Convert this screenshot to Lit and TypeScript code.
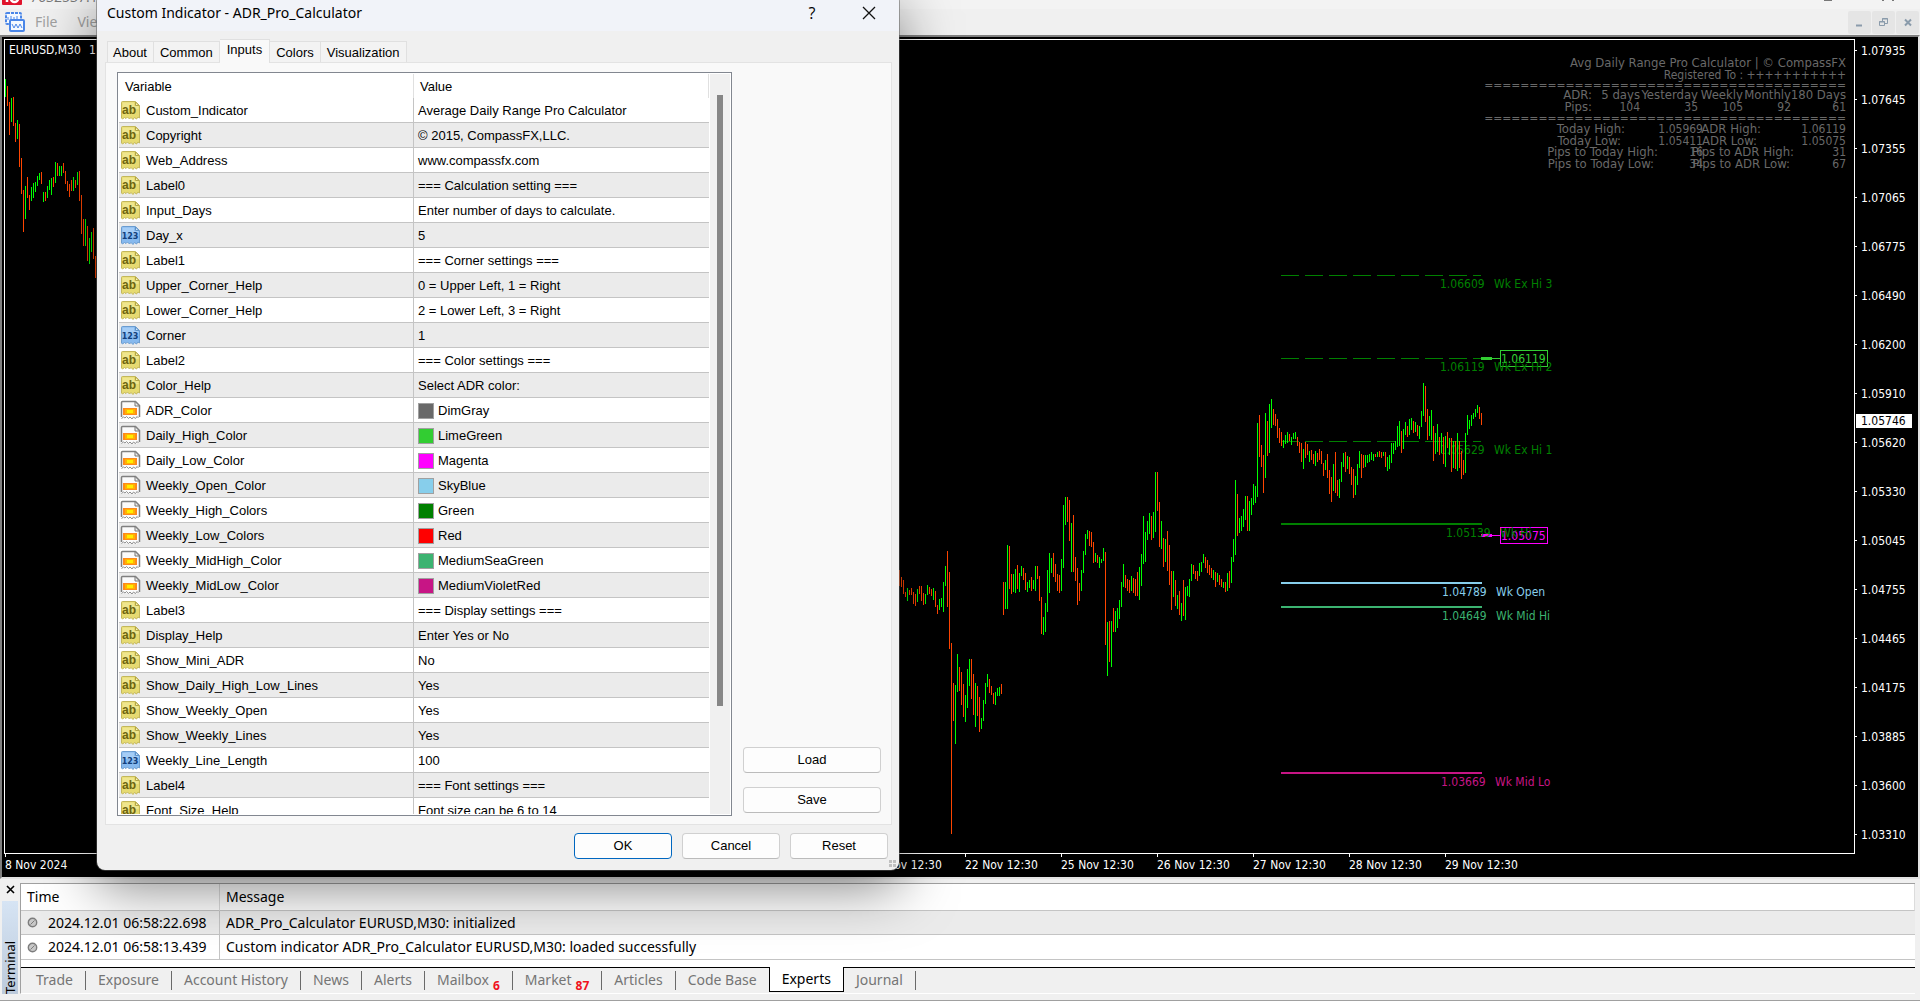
import { LitElement, html, css, svg, nothing } from "lit";
import { customElement, property, state } from "lit/decorators.js";
import { classMap } from "lit/directives/class-map.js";

type Kind = "text" | "number" | "color";
type Input = { kind: Kind; name: string; value: string };

const t = (name: string, value: string): Input => ({ kind: "text", name, value });
const n = (name: string, value: string): Input => ({ kind: "number", name, value });
const c = (name: string, value: string): Input => ({ kind: "color", name, value });

const INPUTS: Input[] = [
  t("Custom_Indicator", "Average Daily Range Pro Calculator"),
  t("Copyright", "© 2015, CompassFX,LLC."),
  t("Web_Address", "www.compassfx.com"),
  t("Label0", "=== Calculation setting ==="),
  t("Input_Days", "Enter number of days to calculate."),
  n("Day_x", "5"),
  t("Label1", "=== Corner settings ==="),
  t("Upper_Corner_Help", "0 = Upper Left, 1 = Right"),
  t("Lower_Corner_Help", "2 = Lower Left, 3 = Right"),
  n("Corner", "1"),
  t("Label2", "=== Color settings ==="),
  t("Color_Help", "Select ADR color:"),
  c("ADR_Color", "DimGray"),
  c("Daily_High_Color", "LimeGreen"),
  c("Daily_Low_Color", "Magenta"),
  c("Weekly_Open_Color", "SkyBlue"),
  c("Weekly_High_Colors", "Green"),
  c("Weekly_Low_Colors", "Red"),
  c("Weekly_MidHigh_Color", "MediumSeaGreen"),
  c("Weekly_MidLow_Color", "MediumVioletRed"),
  t("Label3", "=== Display settings ==="),
  t("Display_Help", "Enter Yes or No"),
  t("Show_Mini_ADR", "No"),
  t("Show_Daily_High_Low_Lines", "Yes"),
  t("Show_Weekly_Open", "Yes"),
  t("Show_Weekly_Lines", "Yes"),
  n("Weekly_Line_Length", "100"),
  t("Label4", "=== Font settings ==="),
  t("Font_Size_Help", "Font size can be 6 to 14"),
];

/* Each bar is its colour (g up, r down), then high and low in thirds of a pixel below the run's y. */
type Run = { x: number; y: number; bars: string };
const RUNS: Run[] = [
  {
    x: 5,
    y: 0,
    bars: `g237-291 r258-318 r306-405 g294-366 r291-378 r369-426 g360-417 r372-501 r474-582 r570-696
      g558-657 r531-594 r585-630 g561-603 g549-594 g546-576 g528-558 g519-540 r516-552 g576-606
      r576-603 g558-594 g540-570 g534-585 r531-561 g486-549 r489-528 g498-528 g498-528 r489-519
      r513-552 r543-573 r552-591 r540-573 g531-573 r540-564 g516-555 r513-603 r585-702 r657-738
      g657-738 r678-783 g714-792 g696-756 r684-777 r768-834`,
  },
  {
    x: 899,
    y: 460,
    bars: `r330-378 r351-381 r360-402 r396-411 g384-423 r390-405 r384-405 r396-432 r402-438 g387-426
      r378-402 r378-423 r399-435 g402-432 g375-405 r381-402 r387-408 g384-420 r393-441 r435-462
      g417-450 g414-441 g366-456 g318-378 r273-441 r336-567 r549-1122 r669-783 g675-852 g582-696
      r621-693 r636-735 r672-771 g705-786 g627-744 g597-678 r597-717 r642-765 g669-801 r678-768
      r711-816 g774-807 g720-783 g669-732 g642-681 r657-699 r678-705 r699-732 g696-735 g684-708
      g681-708 r672-702 r366-465 g366-447 g255-447 r258-387 r342-402 g342-396 g327-399 r315-387
      g339-396 g318-348 r324-360 r339-390 g366-396 g360-384 r351-393 g360-387 g318-393 r318-357
      r348-423 r411-522 g471-525 g429-516 g330-456 g279-399 g294-339 r279-351 r312-366 r342-393
      r345-399 g297-393 g135-324 g111-195 r111-186 r120-243 g189-336 r165-336 r291-363 r324-435
      r369-423 g330-393 g273-339 g222-285 g210-237 r213-258 r216-261 r246-309 g279-306 r285-309
      g291-324 g297-309 g264-303 r276-555 g486-648 r483-606 g483-621 r444-516 g453-516 g444-504
      g420-477 g366-441 g312-381 r345-384 r357-393 r360-399 g348-393 r354-399 r357-408 r336-408
      g321-420 g282-378 g168-312 g216-306 g183-240 g159-222 r168-240 g156-234 g36-216 r36-153
      r126-261 g183-267 r234-321 g237-306 r213-333 r255-375 r333-450 g333-411 r360-438 g405-447
      r393-465 g429-483 r360-468 g381-480 g378-408 g357-411 g312-363 r315-342 r333-357 r333-363
      g309-348 g306-336 g282-309 r291-324 r300-339 r315-345 r324-354 g330-360 r336-381 g339-366
      r345-375 r357-381 g366-384 r366-396 g339-393 r333-384`,
  },
  {
    x: 1231,
    y: 360,
    bars: `g591-669 g537-606 g360-585 r402-528 g474-519 g468-513 g447-501 g408-480 r408-513 g423-513
      g414-465 g372-435 g378-429 g189-411 r165-291 r255-321 r285-399 g159-354 r183-288 g132-279
      g117-204 r147-195 r162-198 r177-234 r204-249 r216-258 g240-264 g225-252 g216-249 r222-243
      g231-255 g219-237 g216-237 r231-258 r246-279 r249-306 g267-327 r246-294 r252-285 g273-306
      r270-300 r282-312 g273-318 r279-306 r267-300 r273-312 r309-348 g300-330 r282-354 r330-402
      r351-426 g312-393 r276-399 r360-408 g357-414 g306-366 g279-321 r276-336 g288-327 r291-342
      r321-375 r327-414 g348-405 g312-375 g273-324 r282-354 r285-324 g285-321 g285-309 g282-306
      g276-300 g282-303 r282-291 g276-291 r273-291 r276-294 g276-288 r276-321 g291-333 g285-327
      g249-309 g249-282 g243-270 g198-261 g183-258 r213-279 g207-267 g186-225 r198-231 g177-225
      g174-210 r183-219 g186-216 r195-228 g198-237 g153-201 g69-168 r78-186 r147-240 g168-228
      g150-240 r198-303 g219-282 g192-276 r231-285 g219-279 r231-312 g228-321 r216-264 g234-285
      r234-336 g243-324 r243-327 g219-333 r243-324 r273-357 r300-345 g219-339 g165-225 g180-207
      g165-198 g159-177 g147-171 g135-159 r141-177 r159-195`,
  },
];

function barPath(colour: string): string {
  let d = "";
  for (const run of RUNS) {
    run.bars
      .trim()
      .split(/\s+/)
      .forEach((bar, i) => {
        if (bar[0] !== colour) return;
        const [high, low] = bar.slice(1).split("-").map((v) => Math.round(Number(v) / 3));
        d += `M${run.x + i * 2} ${run.y + high}h1V${run.y + low}h-1z`;
      });
  }
  return d;
}

const UP = barPath("g");
const DOWN = barPath("r");

const PRICES = [
  "1.07935", "1.07645", "1.07355", "1.07065", "1.06775", "1.06490", "1.06200", "1.05910", "1.05620",
  "1.05330", "1.05045", "1.04755", "1.04465", "1.04175", "1.03885", "1.03600", "1.03310",
];

const DATES = [
  "8 Nov 2024", "", "", "", "", "", "", "", "", "21 Nov 12:30", "22 Nov 12:30", "25 Nov 12:30",
  "26 Nov 12:30", "27 Nov 12:30", "28 Nov 12:30", "29 Nov 12:30",
];

type Level = { y: number; x: number; price: string; name: string; colour: string; dashed?: boolean };
const LEVELS: Level[] = [
  { y: 275, x: 1440, price: "1.06609", name: "Wk Ex Hi 3", colour: "green", dashed: true },
  { y: 358, x: 1440, price: "1.06119", name: "Wk Ex Hi 2", colour: "green", dashed: true },
  { y: 441, x: 1440, price: "1.05629", name: "Wk Ex Hi 1", colour: "green", dashed: true },
  { y: 523, x: 1446, price: "1.05139", name: "Wk Hi", colour: "green" },
  { y: 582, x: 1442, price: "1.04789", name: "Wk Open", colour: "skyblue" },
  { y: 606, x: 1442, price: "1.04649", name: "Wk Mid Hi", colour: "mediumseagreen" },
  { y: 772, x: 1441, price: "1.03669", name: "Wk Mid Lo", colour: "mediumvioletred" },
];

/* Right edge (measured from the plot's right side), baseline, text. */
const RULE = "=".repeat(40);
const LABELS: [number, number, string][] = [
  [-8, 67, "Avg Daily Range Pro Calculator | © CompassFX"],
  [-262, 99, "ADR:"], [-214, 99, "5 days"], [-156, 99, "Yesterday"], [-111, 99, "Weekly"], [-63, 99, "Monthly"], [-8, 99, "180 Days"],
  [-262, 111, "Pips:"],
  [-229, 133, "Today High:"], [-93, 133, "ADR High:"],
  [-233, 145, "Today Low:"], [-97, 145, "ADR Low:"],
  [-196, 156, "Pips to Today High:"], [-60, 156, "Pips to ADR High:"],
  [-200, 168, "Pips to Today Low:"], [-64, 168, "Pips to ADR Low:"],
];
const FIGURES: [number, number, string][] = [
  [-8, 79, "Registered To : +++++++++++"],
  [-8, 89, RULE],
  [-214, 111, "104"], [-156, 111, "35"], [-111, 111, "105"], [-63, 111, "92"], [-8, 111, "61"],
  [-8, 122, RULE],
  [-151, 133, "1.05969"], [-8, 133, "1.06119"],
  [-151, 145, "1.05411"], [-8, 145, "1.05075"],
  [-151, 156, "16"], [-8, 156, "31"],
  [-151, 168, "34"], [-8, 168, "67"],
];

@customElement("price-chart")
export class PriceChart extends LitElement {
  static styles = css`
    :host {
      display: grid;
      grid-template-columns: minmax(0, 1fr) 63px;
      grid-template-rows: minmax(0, 1fr) 23px;
      box-sizing: border-box;
      padding: 2px 0 0 2px;
      background: #000;
      border: 2px solid;
      border-color: #808080 #e3e3e3 #e3e3e3 #808080;
      color: #fff;
      font: 12px/14px "DejaVu Sans Condensed", "DejaVu Sans", sans-serif;
      overflow: hidden;
    }
    .plot {
      border: 1px solid #fff;
      overflow: hidden;
    }
    .canvas {
      display: block;
      width: 100%;
      height: 100%;
    }
    .wide {
      font-size: 13px;
    }
    .prices {
      position: relative;
      display: flex;
      flex-direction: column;
      gap: 26px;
    }
    .price {
      display: flex;
      align-items: center;
      gap: 4px;
      height: 23px;
    }
    .price::before {
      content: "";
      width: 2px;
      height: 1px;
      background: #fff;
    }
    .now {
      position: absolute;
      top: 375px;
      left: 1px;
      width: 56px;
      padding-left: 5px;
      box-sizing: border-box;
      background: #fff;
      color: #000;
    }
    .dates {
      display: flex;
      padding-left: 1px;
    }
    .date {
      flex: 0 0 96px;
      white-space: nowrap;
    }
    .date::before {
      content: "";
      display: block;
      width: 1px;
      height: 3px;
      margin-bottom: 1px;
      background: #fff;
    }
  `;

  private line(l: Level) {
    return l.dashed
      ? svg`<line x1="1281" x2="1481" y1=${l.y + 0.5} y2=${l.y + 0.5} stroke=${l.colour} stroke-dasharray="18 6"></line>`
      : svg`<rect x="1281" y=${l.y} width="201" height="2" fill=${l.colour}></rect>`;
  }

  private level(l: Level) {
    const base = l.y + (l.dashed ? 13 : 14);
    return svg`${this.line(l)}
      <text x=${l.x} y=${base} fill=${l.colour}>${l.price}</text>
      <text x=${l.x + 54} y=${base} fill=${l.colour}>${l.name}</text>`;
  }

  private tag(y: number, price: string, colour: string) {
    return svg`<rect x="1481" y=${y - 1} width="11" height="3" fill=${colour}></rect>
      <rect x="1492" y=${y} width="8" height="1" fill=${colour}></rect>
      <rect x="1500.5" y=${y - 7.5} width="47" height="16" fill="none" stroke=${colour}></rect>
      <text x="1501" y=${y + 5} fill=${colour}>${price}</text>`;
  }

  render() {
    return html`
      <div class="plot">
        <svg class="canvas" role="img" aria-label="EURUSD,M30">
          <g transform="translate(-5 -40)">
            <text x="9" y="54" fill="#fff">EURUSD,M30</text>
            <text x="89" y="54" fill="#fff">1</text>
            ${this.tag(358, "1.06119", "limegreen")} ${this.tag(535, "1.05075", "magenta")}
            ${LEVELS.map((l) => this.level(l))}
            <g shape-rendering="crispEdges">
              <path d=${UP} fill="#0f0"></path>
              <path d=${DOWN} fill="#ff4500"></path>
            </g>
          </g>
          <svg x="100%" overflow="visible">
            <g transform="translate(0 -40)" fill="dimgray" text-anchor="end">
              ${LABELS.map(([x, y, text]) => svg`<text class="wide" x=${x} y=${y}>${text}</text>`)}
              ${FIGURES.map(([x, y, text]) => svg`<text x=${x} y=${y}>${text}</text>`)}
            </g>
          </svg>
        </svg>
      </div>
      <div class="prices">
        ${PRICES.map((p) => html`<div class="price">${p}</div>`)}
        <div class="now">1.05746</div>
      </div>
      <div class="dates">
        ${DATES.map((d) => (d ? html`<div class="date">${d}</div>` : html`<div class="date"></div>`))}
      </div>
    `;
  }
}

@customElement("input-icon")
export class InputIcon extends LitElement {
  @property() kind: Kind = "text";

  static styles = css`
    :host {
      display: block;
      width: 21px;
      height: 21px;
    }
    .glyph {
      display: block;
    }
    .ab {
      font: bold 12px "Liberation Sans", sans-serif;
    }
    .num {
      font: bold 8px "DejaVu Sans", sans-serif;
    }
  `;

  render() {
    const paper = "M1.5 2.5q0-1 1-1H15.500l4 4V18l-1.500-1-1.500 2-2-1.500-1.500 2-2-2-1.500 1.500-2-2-1.500 1.500-1.500-1-2 1.500L1.500 18z";
    if (this.kind === "color") {
      return html`<svg class="glyph" width="21" height="21" viewBox="0 0 21 21">
        <path d=${paper} fill="#fbfbfb"></path>
        <path d="M1.500 17V2.500q0-1 1-1H15.500l4 4V17" fill="none" stroke="#808080" stroke-width="1.500"></path>
        <path d="M1.500 18.500l2-1.500 1.500 1 1.500-1.500 2 2 1.500-1.500 2 2 1.500-2 2 1.500 1.500-2 1.500 1.500" fill="none" stroke="#909090"></path>
        <path d="M15 1.500V6h4.500z" fill="#eee" stroke="#777"></path>
        <rect x="3" y="8" width="14" height="7" fill="#ff8a1c"></rect>
        <rect x="5" y="9" width="10" height="5" fill="#ffb400"></rect>
        <rect x="7" y="10" width="6" height="3" fill="#ffee00"></rect>
      </svg>`;
    }
    const blue = this.kind === "number";
    return html`<svg class="glyph" width="21" height="21" viewBox="0 0 21 21">
      <path d=${paper} fill=${blue ? "#86b9ee" : "#e6da70"} stroke=${blue ? "#6a9cd0" : "#c3b75a"}></path>
      <path d="M2.500 2.500H14V6h4.500v3H2.500z" fill=${blue ? "#a5cdf6" : "#efe68e"}></path>
      <path d="M15.500 2V5.500H19z" fill=${blue ? "#cfe5fb" : "#faf5bd"} stroke=${blue ? "#5f93c8" : "#b3a648"}></path>
      ${blue
        ? svg`<text class="num" x="10" y="14" text-anchor="middle" fill="#123f7c">123</text>`
        : svg`<text class="ab" x="9" y="14" text-anchor="middle" fill="#6d6410">ab</text>`}
    </svg>`;
  }
}

const DIALOG_TABS = ["About", "Common", "Inputs", "Colors", "Visualization"];

@customElement("indicator-dialog")
export class IndicatorDialog extends LitElement {
  @state() private tab = "Inputs";

  static styles = css`
    :host {
      display: flex;
      flex-direction: column;
      box-sizing: border-box;
      background: #f0f0f0;
      border-radius: 8px;
      box-shadow: 0 0 0 1px rgba(90, 90, 90, 0.5), 0 16px 56px rgba(0, 0, 0, 0.5);
      color: #000;
      font: 13px/16px "Liberation Sans", Arial, sans-serif;
    }
    .title {
      display: flex;
      align-items: center;
      height: 37px;
      padding: 0 10px;
      background: #f1f3f9;
      border-radius: 8px 8px 0 0;
      font: 14px/20px "Noto Sans", "Open Sans", sans-serif;
    }
    .name {
      flex: 1;
      margin: 0;
      font: inherit;
    }
    .tool {
      width: 40px;
      height: 24px;
      margin-left: 17px;
      padding: 0;
      border: 0;
      background: none;
      color: #000;
      font: 16px/24px "Open Sans", sans-serif;
    }
    .tool svg {
      display: block;
      margin: 0 auto;
    }
    .tabs {
      display: flex;
      align-items: flex-end;
      height: 31px;
      padding: 0 10px;
    }
    .tab {
      height: 21px;
      padding: 1px 6px 0;
      border: 1px solid #e0e0e0;
      border-width: 1px 1px 0 0;
      background: #f3f3f3;
      color: #000;
      font: inherit;
    }
    .tab:first-child {
      border-left-width: 1px;
      padding-left: 5px;
    }
    .on {
      z-index: 1;
      height: 24px;
      margin-bottom: -1px;
      padding: 0 7px 3px;
      background: #f9f9f9;
    }
    .panel {
      flex: 1;
      min-height: 0;
      display: flex;
      gap: 11px;
      margin: 0 7px 0 8px;
      padding: 9px 10px 8px 11px;
      background: #f9f9f9;
      border: 1px solid #e3e3e3;
    }
    .list {
      flex: 1;
      min-width: 0;
      display: flex;
      gap: 1px;
      box-sizing: border-box;
      padding: 1px;
      background: #fff;
      border: 1px solid #828790;
    }
    .view {
      flex: 1;
      min-width: 0;
      overflow: hidden;
    }
    .grid {
      width: 100%;
      table-layout: fixed;
      border-spacing: 0;
    }
    .grid th {
      box-sizing: border-box;
      height: 24px;
      padding: 1px 6px 0;
      font-weight: normal;
      text-align: left;
      border-right: 1px solid #e0e0e0;
    }
    .first {
      width: 50%;
    }
    .grid td {
      box-sizing: border-box;
      height: 25px;
      padding: 0 4px;
      border-bottom: 1px solid #c4c4c4;
    }
    .grid td:first-child {
      padding: 0 1px;
      border-right: 1px solid #c4c4c4;
    }
    .grid tr:nth-child(even) td {
      background: #ebebeb;
    }
    .cell {
      display: flex;
      align-items: center;
      gap: 5px;
      box-sizing: border-box;
      height: 24px;
      padding-top: 1px;
      white-space: nowrap;
    }
    .swatch {
      box-sizing: border-box;
      width: 16px;
      height: 16px;
      margin-right: -1px;
      border: 1px solid #a0a0a0;
    }
    .bar {
      width: 20px;
      background: #f0f0f0;
    }
    .thumb {
      width: 6px;
      height: 611px;
      margin: 21px auto 0 7px;
      background: #868686;
    }
    .side {
      flex: 0 0 138px;
      display: flex;
      flex-direction: column;
      justify-content: flex-end;
      gap: 14px;
      padding-bottom: 3px;
    }
    .push {
      height: 26px;
      padding: 0;
      background: #fdfdfd;
      border: 1px solid #d0d0d0;
      border-bottom-color: #bbb;
      border-radius: 4px;
      color: #000;
      font: inherit;
    }
    .actions {
      display: flex;
      justify-content: flex-end;
      gap: 10px;
      padding: 8px 11px 11px;
    }
    .actions .push {
      width: 98px;
    }
    .actions .main {
      border-color: #0067c0;
    }
    .grip {
      position: absolute;
      right: 2px;
      bottom: 2px;
    }
  `;

  render() {
    return html`
      <header class="title">
        <h1 class="name">Custom Indicator - ADR_Pro_Calculator</h1>
        <button class="tool" aria-label="Help">?</button>
        <button class="tool" aria-label="Close">
          <svg width="14" height="14" viewBox="0 0 14 14">
            <path d="M1 1l12 12M13 1L1 13" stroke="#111" stroke-width="1.300"></path>
          </svg>
        </button>
      </header>
      <div class="tabs" role="tablist">
        ${DIALOG_TABS.map(
          (name) => html`<button
            class=${classMap({ tab: true, on: name === this.tab })}
            role="tab"
            aria-selected=${name === this.tab}
            @click=${() => (this.tab = name)}
          >${name}</button>`
        )}
      </div>
      <section class="panel">
        <div class="list">
          <div class="view">
            <table class="grid">
              <thead>
                <tr><th class="first">Variable</th><th>Value</th></tr>
              </thead>
              <tbody>
                ${INPUTS.map(
                  (row) => html`<tr>
                    <td><div class="cell"><input-icon .kind=${row.kind}></input-icon>${row.name}</div></td>
                    <td>
                      <div class="cell">
                        ${row.kind === "color"
                          ? html`<span class="swatch" style="background:${row.value.toLowerCase()}"></span>`
                          : nothing}${row.value}
                      </div>
                    </td>
                  </tr>`
                )}
              </tbody>
            </table>
          </div>
          <div class="bar"><div class="thumb"></div></div>
        </div>
        <div class="side">
          <button class="push">Load</button>
          <button class="push">Save</button>
        </div>
      </section>
      <footer class="actions">
        <button class="push main">OK</button>
        <button class="push">Cancel</button>
        <button class="push">Reset</button>
      </footer>
      <svg class="grip" width="8" height="8" viewBox="0 0 8 8">
        <path d="M0 0h3v3H0zM4 0h3v3H4zM0 4h3v3H0zM4 4h3v3H4z" fill="#c0c0c0"></path>
      </svg>
    `;
  }
}

const TERMINAL_TABS: [string, string?][] = [
  ["Trade"], ["Exposure"], ["Account History"], ["News"], ["Alerts"], ["Mailbox", "6"],
  ["Market", "87"], ["Articles"], ["Code Base"], ["Experts"], ["Journal"],
];

const LOG = [
  ["2024.12.01 06:58:22.698", "ADR_Pro_Calculator EURUSD,M30: initialized"],
  ["2024.12.01 06:58:13.439", "Custom indicator ADR_Pro_Calculator EURUSD,M30: loaded successfully"],
];

@customElement("terminal-panel")
export class TerminalPanel extends LitElement {
  @state() private tab = "Experts";

  static styles = css`
    :host {
      display: flex;
      box-sizing: border-box;
      padding: 4px 5px 6px 0;
      background: #f0f0f0;
      border-bottom: 1px solid #a0a0a0;
      color: #000;
      font: 14px/20px "Noto Sans", "Open Sans", sans-serif;
    }
    .rail {
      display: flex;
      flex-direction: column;
      align-items: center;
      width: 20px;
    }
    .close {
      height: 18px;
      padding: 2px 4px 7px;
      border: 0;
      background: none;
    }
    .close svg {
      display: block;
    }
    .caption {
      flex: 1;
      width: 16px;
      box-sizing: border-box;
      background: linear-gradient(to bottom, #bccadb, #d6e4f4);
      writing-mode: vertical-rl;
      transform: rotate(180deg);
      font-size: 13px;
      line-height: 16px;
    }
    .body {
      flex: 1;
      min-width: 0;
      border-left: 1px solid #a0a0a0;
      border-bottom: 1px solid #fff;
    }
    .sheet {
      padding-bottom: 7px;
      background: #fff;
      border-top: 1px solid #a0a0a0;
      border-bottom: 1px solid #000;
    }
    .log {
      width: 100%;
      table-layout: fixed;
      border-spacing: 0;
      white-space: nowrap;
    }
    .log th {
      height: 26px;
      padding: 0 6px;
      text-align: left;
      font-weight: normal;
      border-bottom: 1px solid #c4c4c4;
      border-right: 1px solid #dcdcdc;
    }
    .when {
      width: 186px;
    }
    .log td {
      height: 24px;
      padding: 0 6px;
      border-bottom: 1px solid #c4c4c4;
    }
    .log td:first-child {
      border-right: 1px solid #c4c4c4;
    }
    .log tbody tr:first-child td {
      height: 23px;
      background: #ebebeb;
    }
    .stamp {
      display: flex;
      align-items: center;
      gap: 10px;
    }
    .tabs {
      display: flex;
      height: 26px;
      padding-left: 3px;
    }
    .tab {
      display: flex;
      align-items: center;
      height: 24px;
      padding: 0 0 0 12px;
      border: 0;
      background: none;
      color: #757575;
      font: inherit;
    }
    .tab::after {
      content: "";
      width: 1px;
      height: 19px;
      margin-left: 12px;
      background: #6a6a6a;
    }
    .count {
      align-self: flex-end;
      margin: 0 0 -2px 4px;
      color: #f01020;
      font: bold 12px/16px "Noto Sans", sans-serif;
    }
    .on {
      height: 25px;
      margin: -1px 0 0 -1px;
      padding: 0 12px;
      border: 1px solid #000;
      border-top: 0;
      background: #fff;
      color: #000;
    }
    .on::after {
      content: none;
    }
  `;

  render() {
    return html`
      <div class="rail">
        <button class="close" aria-label="Close panel">
          <svg width="9" height="9" viewBox="0 0 9 9">
            <path d="M1 1l7 7M8 1L1 8" stroke="#000" stroke-width="1.600"></path>
          </svg>
        </button>
        <div class="caption">Terminal</div>
      </div>
      <div class="body">
        <div class="sheet">
          <table class="log">
            <thead>
              <tr><th class="when">Time</th><th>Message</th></tr>
            </thead>
            <tbody>
              ${LOG.map(
                ([time, message]) => html`<tr>
                  <td>
                    <div class="stamp">
                      <svg width="11" height="11" viewBox="0 0 11 11">
                        <circle cx="5.500" cy="5.500" r="4.200" fill="#c8c8c8" stroke="#7c7c7c" stroke-width="1.400"></circle>
                        <path d="M3.500 7.500l4-4" stroke="#7c7c7c"></path>
                      </svg>
                      ${time}
                    </div>
                  </td>
                  <td>${message}</td>
                </tr>`
              )}
            </tbody>
          </table>
        </div>
        <div class="tabs" role="tablist">
          ${TERMINAL_TABS.map(
            ([name, count]) => html`<button
              class=${classMap({ tab: true, on: name === this.tab })}
              role="tab"
              aria-selected=${name === this.tab}
              @click=${() => (this.tab = name)}
            >${name}${count ? html`<span class="count">${count}</span>` : nothing}</button>`
          )}
        </div>
      </div>
    `;
  }
}

@customElement("app-root")
export class AppRoot extends LitElement {
  static styles = css`
    :host {
      position: relative;
      display: grid;
      grid-template-columns: minmax(0, 1fr);
      grid-template-rows: 9px 26px minmax(0, 1fr) 122px;
      height: 100vh;
      overflow: hidden;
      background: #f0f0f0;
    }
    .caption {
      display: flex;
      align-items: flex-end;
      gap: 8px;
      padding: 0 21px 4px 2px;
      background: #f3f3f3;
      color: #777;
      font: 14px/16px "Open Sans", sans-serif;
    }
    .logo {
      flex: none;
    }
    .account {
      flex: 1;
    }
    .marks {
      align-self: flex-start;
    }
    .menu {
      display: flex;
      align-items: center;
      padding-left: 5px;
      color: #a0a0a0;
      font: 14px/20px "Noto Sans", "Open Sans", sans-serif;
    }
    .item {
      padding: 0 10px;
      border: 0;
      background: none;
      color: inherit;
      font: inherit;
    }
    .frames {
      display: flex;
      gap: 1px;
      margin-left: auto;
      padding-right: 1px;
    }
    .frame {
      width: 23px;
      height: 23px;
      padding: 0;
      border: 0;
      border-radius: 2px;
      background: #e5e5e5;
    }
    .frame svg {
      display: block;
      margin: 0 auto;
    }
    .dialog {
      position: absolute;
      top: -6px;
      bottom: 131px;
      left: 97px;
      width: 802px;
    }
  `;

  render() {
    return html`
      <div class="caption">
        <svg class="logo" width="20" height="20" viewBox="0 0 20 20">
          <rect width="20" height="20" rx="1" fill="#e0142c"></rect>
          <path d="M5 10v7M9 14a3.500 3 0 0 0 7 0" stroke="#fff" stroke-width="2.500" fill="none"></path>
        </svg>
        <span class="account">7632537:12</span>
        <svg class="marks" width="76" height="2" viewBox="0 0 76 2">
          <path d="M1 0h8M59 0h2M69 0h2" stroke="#777" stroke-width="2"></path>
        </svg>
      </div>
      <nav class="menu">
        <svg width="20" height="20" viewBox="0 0 20 20">
          <rect x="1" y="1" width="15" height="11" rx="1" fill="#f4f9ff" stroke="#4a86e8" stroke-width="2" stroke-dasharray="3 1"></rect>
          <path d="M3 8V5M6 9V4M9 8V5M12 7V4" stroke="#4a86e8"></path>
          <rect x="5" y="8" width="14" height="11" rx="1" fill="#f4f9ff" stroke="#4a86e8" stroke-width="2"></rect>
          <path d="M7 12l2 4 2-4 2 4 2-4 2 4" stroke="#4a86e8" fill="none"></path>
        </svg>
        <button class="item">File</button>
        <button class="item">View</button>
        <div class="frames">
          <button class="frame" aria-label="Minimize">
            <svg width="13" height="13" viewBox="0 0 13 13"><path d="M3 9.500h6" stroke="#8a9bab" stroke-width="2"></path></svg>
          </button>
          <button class="frame" aria-label="Restore">
            <svg width="13" height="13" viewBox="0 0 13 13">
              <path d="M5.500 5V2.500h5v5H8M5 3h6M2.500 5.500h5v4h-5zM2 6h6" stroke="#8a9bab" fill="none"></path>
            </svg>
          </button>
          <button class="frame" aria-label="Close">
            <svg width="13" height="13" viewBox="0 0 13 13"><path d="M4 3.500l6 6M10 3.500l-6 6" stroke="#8a9bab" stroke-width="2"></path></svg>
          </button>
        </div>
      </nav>
      <price-chart></price-chart>
      <terminal-panel></terminal-panel>
      <indicator-dialog class="dialog"></indicator-dialog>
    `;
  }
}
